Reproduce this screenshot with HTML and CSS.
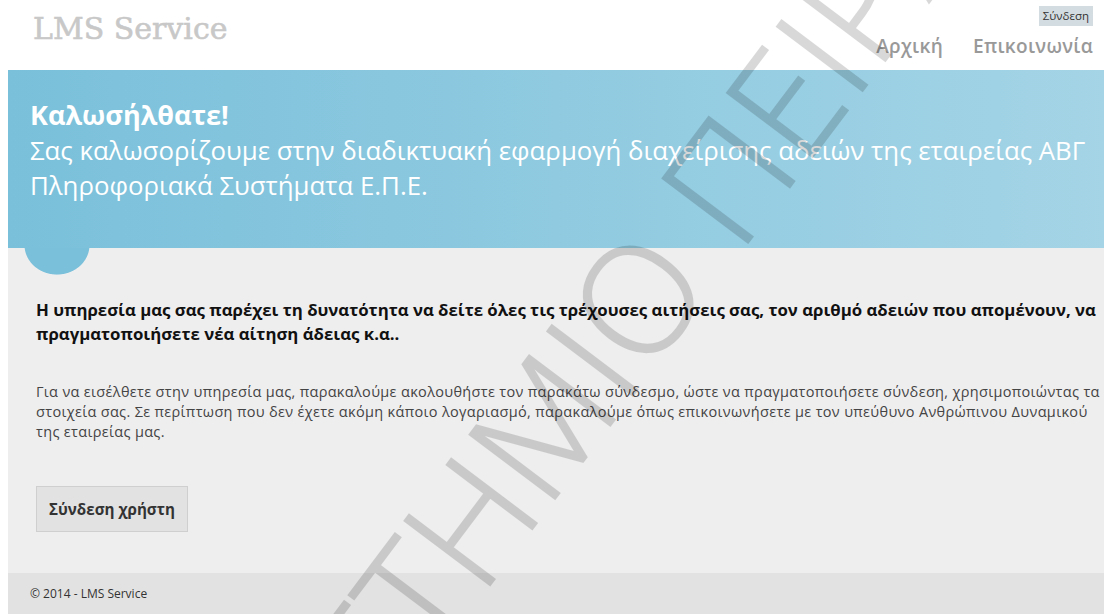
FILE: index.html
```html
<!DOCTYPE html>
<html lang="el">
<head>
<meta charset="utf-8">
<title>LMS Service</title>
<link rel="stylesheet" href="styles.css">
</head>
<body>
<header class="site-header">
  <div class="site-title">LMS Service</div>
  <div class="header-right">
    <a class="login-link" href="#">Σύνδεση</a>
    <nav class="menu">
      <a href="#">Αρχική</a>
      <a href="#">Επικοινωνία</a>
    </nav>
  </div>
</header>

<section class="featured">
  <h1 class="featured-title">Καλωσήλθατε!</h1>
  <h2 class="featured-sub">Σας καλωσορίζουμε στην διαδικτυακή εφαρμογή διαχείρισης αδειών της εταιρείας ΑΒΓ Πληροφοριακά Συστήματα Ε.Π.Ε.</h2>
</section>

<main class="main-content">
  <h3 class="lead">Η υπηρεσία μας σας παρέχει τη δυνατότητα να δείτε όλες τις τρέχουσες αιτήσεις σας, τον αριθμό αδειών που απομένουν, να πραγματοποιήσετε νέα αίτηση άδειας κ.α..</h3>
  <p class="info">Για να εισέλθετε στην υπηρεσία μας, παρακαλούμε ακολουθήστε τον παρακάτω σύνδεσμο, ώστε να πραγματοποιήσετε σύνδεση, χρησιμοποιώντας τα στοιχεία σας. Σε περίπτωση που δεν έχετε ακόμη κάποιο λογαριασμό, παρακαλούμε όπως επικοινωνήσετε με τον υπεύθυνο Ανθρώπινου Δυναμικού της εταιρείας μας.</p>
  <button class="login-button" type="button">Σύνδεση χρήστη</button>
</main>

<footer class="site-footer">© 2014 - LMS Service</footer>

<div class="watermark-layer" aria-hidden="true">
  <div class="watermark">ΠΑΝΕΠΙΣΤΗΜΙΟ ΠΕΙΡΑΙΩΣ</div>
</div>
</body>
</html>
```

FILE: styles.css
```css
html, body {
  margin: 0;
  padding: 0;
}

body {
  background: #fff;
  color: #333;
  font-family: "Open Sans", "Noto Sans", sans-serif;
  overflow: hidden;
  height: 614px;
  position: relative;
}

/* header */
.site-header {
  height: 70px;
  display: flex;
  justify-content: space-between;
  align-items: flex-start;
}

.site-title {
  font-family: "DejaVu Serif", "Liberation Serif", serif;
  color: #c8c8c8;
  font-size: 30px;
  line-height: 34px;
  padding: 12px 0 0 33px;
  -webkit-text-stroke: 0.6px #c8c8c8;
}

.header-right {
  display: flex;
  flex-direction: column;
  align-items: flex-end;
  padding: 6px 11px 0 0;
}

.login-link {
  background: #d3dce0;
  color: #333;
  font-size: 11.5px;
  line-height: 20px;
  padding: 0 4px;
  text-decoration: none;
}

.menu {
  display: flex;
  gap: 30px;
  margin-top: 8px;
}

.menu a {
  color: #999;
  font-size: 19px;
  font-weight: 600;
  letter-spacing: 0.3px;
  line-height: 24px;
  text-decoration: none;
}

/* blue welcome band */
.featured {
  margin-left: 8px;
  height: 178px;
  box-sizing: border-box;
  padding: 27px 10px 0 22px;
  background: linear-gradient(to right, #7ac0da 0%, #a4d4e6 100%);
  color: #fff;
}

.featured-title {
  margin: 0;
  font-size: 27px;
  font-weight: 700;
  line-height: 36px;
}

.featured-sub {
  margin: 0;
  font-size: 25.8px;
  font-weight: 400;
  line-height: 35px;
}

/* main grey area with the small accent tab */
.main-content {
  margin-left: 8px;
  height: 325px;
  box-sizing: border-box;
  padding: 50px 0 0 28px;
  background:
    radial-gradient(ellipse 33px 30px at 49px -3px, #7ac0da 97%, rgba(122, 192, 218, 0) 100%) no-repeat,
    #efeeef;
}

.lead {
  margin: 0;
  color: #111;
  font-size: 16.8px;
  font-weight: 700;
  line-height: 24px;
}

.info {
  margin: 36px 0 0;
  color: #444;
  font-size: 14.5px;
  letter-spacing: 0.33px;
  line-height: 20px;
}

.login-button {
  margin-top: 44px;
  height: 46px;
  padding: 0 12px;
  background: #e2e2e2;
  border: 1px solid #cfcfcf;
  color: #333;
  font-family: inherit;
  font-size: 15.2px;
  font-weight: 700;
}

/* footer */
.site-footer {
  margin-left: 8px;
  height: 41px;
  background: #e2e2e2;
  padding-left: 22px;
  font-size: 12px;
  line-height: 41px;
  color: #333;
}

/* diagonal watermark laid over the page; the layer carries the transparency
   so the outline stroke and the glyph fill blend as one shape */
.watermark-layer {
  position: absolute;
  inset: 0;
  overflow: hidden;
  pointer-events: none;
  opacity: 0.15;
}

.watermark {
  position: absolute;
  left: 548px;
  top: 412px;
  transform: translate(-50%, -50%) rotate(-53deg);
  white-space: nowrap;
  font-family: "Open Sans", sans-serif;
  font-weight: 300;
  font-size: 150px;
  color: #000;
  -webkit-text-stroke: 2px #000;
}
```
